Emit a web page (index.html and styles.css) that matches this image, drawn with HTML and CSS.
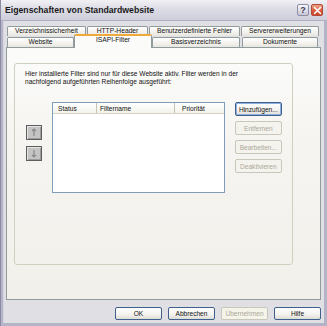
FILE: index.html
```html
<!DOCTYPE html>
<html lang="de">
<head>
    <meta charset="UTF-8">
    <title>Eigenschaften von Standardwebsite</title>
    <link rel="stylesheet" href="styles.css">
</head>
<body>
    <div class="window">
        <div class="titlebar">
            <span class="title">Eigenschaften von Standardwebsite</span>
            <div class="caption-buttons">
                <span class="cap help">?</span>
                <span class="cap close">
                    <svg width="9" height="9" viewBox="0 0 9 9"><path d="M1.5 1.5 L7.5 7.5 M7.5 1.5 L1.5 7.5" stroke="#fff" stroke-width="1.6" stroke-linecap="round"/></svg>
                </span>
            </div>
        </div>
        <div class="body">
            <div class="tabs">
                <div class="tab-row">
                    <div class="tab w1">Verzeichnissicherheit</div>
                    <div class="tab w2">HTTP-Header</div>
                    <div class="tab w3">Benutzerdefinierte Fehler</div>
                    <div class="tab w4">Servererweiterungen</div>
                </div>
                <div class="tab-row front">
                    <div class="tab w5">Website</div>
                    <div class="tab w6 selected">ISAPI-Filter</div>
                    <div class="tab w7">Basisverzeichnis</div>
                    <div class="tab w8">Dokumente</div>
                </div>
            </div>
            <div class="panel">
                <div class="group">
                    <p class="intro">Hier installierte Filter sind nur für diese Website aktiv. Filter werden in der nachfolgend aufgeführten Reihenfolge ausgeführt:</p>
                    <div class="filter-area">
                        <div class="order-buttons">
                            <span class="order-btn">
                                <svg width="6" height="9" viewBox="0 0 6 9"><path d="M3 1 V8 M1 3 L3 1 L5 3" stroke="#8a8a8a" stroke-width="1.2" fill="none"/></svg>
                            </span>
                            <span class="order-btn">
                                <svg width="6" height="9" viewBox="0 0 6 9"><path d="M3 1 V8 M1 6 L3 8 L5 6" stroke="#8a8a8a" stroke-width="1.2" fill="none"/></svg>
                            </span>
                        </div>
                        <div class="listview">
                            <div class="lv-header">
                                <span class="col c-status">Status</span>
                                <span class="col c-name">Filtername</span>
                                <span class="col c-prio">Priorität</span>
                            </div>
                        </div>
                        <div class="side-buttons">
                            <span class="btn focused">Hinzufügen...</span>
                            <span class="btn disabled">Entfernen</span>
                            <span class="btn disabled">Bearbeiten...</span>
                            <span class="btn disabled">Deaktivieren</span>
                        </div>
                    </div>
                </div>
            </div>
            <div class="footer">
                <span class="btn big">OK</span>
                <span class="btn big">Abbrechen</span>
                <span class="btn big disabled">Übernehmen</span>
                <span class="btn big">Hilfe</span>
            </div>
        </div>
    </div>
</body>
</html>
```

FILE: styles.css
```css
body {
    margin: 0;
    font-family: "Liberation Sans", Arial, sans-serif;
    background: #e0dfe3;
}

.window {
    width: 327px;
    height: 326px;
    box-sizing: border-box;
    background: #e0dfe3;
    border-left: 3px solid #b4b4c8;
    border-right: 3px solid #b4b4c8;
    border-bottom: 3px solid #b4b4c8;
    box-shadow: inset 1px 0 0 #d6d6e2;
    display: flex;
    flex-direction: column;
    position: relative;
}

.window::before {
    content: "";
    position: absolute;
    left: -3px;
    top: 0;
    bottom: -3px;
    width: 1px;
    background: #8a8aa2;
}

.titlebar {
    height: 21px;
    margin: 0 -3px;
    padding: 0 4px 0 5px;
    display: flex;
    align-items: center;
    background: linear-gradient(#f1f1f5, #dcdce5 45%, #cfcfdc);
    border-bottom: 1px solid #b0b0c2;
    box-sizing: border-box;
}

.title {
    font-size: 8.7px;
    font-weight: bold;
    color: #1a1a1a;
}

.caption-buttons {
    margin-left: auto;
    display: flex;
    gap: 2px;
}

.cap {
    width: 12px;
    height: 12px;
    border-radius: 2px;
    display: flex;
    align-items: center;
    justify-content: center;
    box-sizing: border-box;
}

.help {
    background: linear-gradient(#f8f8fb, #c6c6d4);
    border: 1px solid #8d8da6;
    font-size: 9px;
    font-weight: bold;
    color: #3c3c50;
}

.close {
    background: linear-gradient(#f0a48a, #dc5a3a 55%, #c8442a);
    border: 1px solid #b04a36;
}

.body {
    flex: 1;
    display: flex;
    flex-direction: column;
    padding: 5px 3px 0 3px;
}

.tabs {
    padding-left: 1px;
}

.tab-row {
    display: flex;
    gap: 1px;
    height: 10px;
    align-items: flex-end;
}

.tab-row.front {
    height: 11px;
}

.tab {
    height: 10px;
    box-sizing: border-box;
    border: 1px solid #919b9c;
    border-bottom: none;
    border-radius: 2px 2px 0 0;
    background: linear-gradient(#ffffff, #f2f1ec 60%, #e6e5df);
    font-size: 6.7px;
    color: #111;
    display: flex;
    align-items: center;
    justify-content: center;
    line-height: 1;
}

.w1 { width: 79px; }
.w2 { width: 61px; }
.w3 { width: 91px; }
.w4 { width: 78px; }
.w5 { width: 67px; }
.w6 { width: 78px; }
.w7 { width: 88px; }
.w8 { width: 76px; margin-left: 1px; }

.tab.selected {
    height: 14px;
    margin: 0 -1px -1px -1px;
    position: relative;
    z-index: 1;
    background: #fbfbf9;
    border-top: 2px solid #f2a93c;
    align-items: flex-start;
    padding-top: 1px;
}

.panel {
    height: 253px;
    box-sizing: border-box;
    border: 1px solid #919b9c;
    background: linear-gradient(#fcfcfb, #f5f4f0 40%, #f1f0eb);
    padding: 15px 27px 0 7px;
}

.group {
    height: 202px;
    box-sizing: border-box;
    border: 1px solid #d0d0bf;
    border-radius: 3px;
    padding: 6px 10px 0 10px;
}

.intro {
    margin: 0;
    font-size: 6.6px;
    line-height: 7.5px;
    color: #111;
    width: 222px;
}

.filter-area {
    display: flex;
    margin-top: 17px;
    margin-left: 1px;
}

.order-buttons {
    display: flex;
    flex-direction: column;
    gap: 6px;
    margin-top: 23px;
    width: 16px;
}

.order-btn {
    width: 16px;
    height: 15px;
    box-sizing: border-box;
    border: 1px solid #5e5e5e;
    background: #c4c4c4;
    box-shadow: inset 1px 1px 0 #e4e4e4, inset -1px -1px 0 #9c9c9c;
    display: flex;
    align-items: center;
    justify-content: center;
}

.listview {
    width: 175px;
    height: 91px;
    box-sizing: border-box;
    margin-left: 10px;
    border: 1px solid #7f9db9;
    background: #fff;
}

.lv-header {
    height: 10px;
    display: flex;
    background: linear-gradient(#ffffff, #f3f2ec);
    border-bottom: 1px solid #d6d3c4;
    font-size: 6.6px;
    color: #111;
    align-items: center;
}

.col {
    height: 100%;
    display: flex;
    align-items: center;
    box-sizing: border-box;
    border-right: 1px solid #c7c5b2;
    padding-left: 5px;
}

.c-status { width: 44px; }
.c-name { width: 78px; padding-left: 3px; }
.c-prio { border-right: none; padding-left: 7px; }

.side-buttons {
    display: flex;
    flex-direction: column;
    margin-left: 10px;
    gap: 5px;
    width: 48px;
}

.btn {
    height: 14px;
    box-sizing: border-box;
    border: 1px solid #3f5f8c;
    border-radius: 2px;
    background: linear-gradient(#ffffff, #f3f2ee 60%, #dedcd6);
    font-size: 6.6px;
    color: #111;
    display: flex;
    align-items: center;
    justify-content: center;
}

.btn.focused {
    box-shadow: inset 0 0 0 1px #8fb0e0;
}

.btn.disabled {
    border-color: #c9c7ba;
    background: #f5f4ea;
    color: #aca899;
}

.side-buttons .btn.disabled {
    background: #f4f3ee;
}

.footer {
    display: flex;
    justify-content: flex-end;
    gap: 6px;
    padding: 7px 0 0 0;
}

.btn.big {
    width: 47px;
    height: 13px;
}
```
